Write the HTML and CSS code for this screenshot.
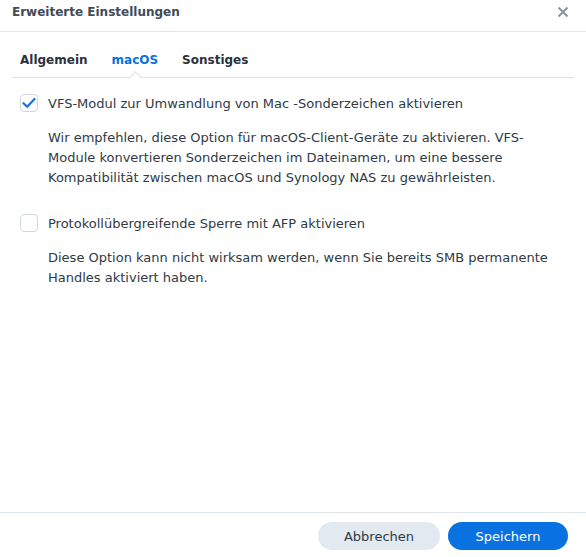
FILE: index.html
```html
<!DOCTYPE html>
<html lang="de">
<head>
<meta charset="utf-8">
<link rel="stylesheet" href="styles.css">
</head>
<body>
<div class="dialog">
  <header class="head">
    <span class="title">Erweiterte Einstellungen</span>
    <span class="close" aria-label="Schließen">
      <svg width="12" height="12" viewBox="0 0 12 12"><path d="M1.5 1.5 L10.5 10.5 M10.5 1.5 L1.5 10.5" stroke="#8a949e" stroke-width="1.9" fill="none"/></svg>
    </span>
  </header>
  <nav class="tabs">
    <span class="tab">Allgemein</span>
    <span class="tab active">macOS</span>
    <span class="tab">Sonstiges</span>
  </nav>
  <main class="content">
    <div class="option">
      <label class="row">
        <span class="box checked">
          <svg width="14" height="12" viewBox="0 0 14 12"><path d="M1.5 6.2 L5.2 9.8 L12.5 2" stroke="#1572e0" stroke-width="2.2" fill="none" stroke-linecap="round" stroke-linejoin="round"/></svg>
        </span>
        <span class="label">VFS-Modul zur Umwandlung von Mac -Sonderzeichen aktivieren</span>
      </label>
      <p class="desc">Wir empfehlen, diese Option für macOS-Client-Geräte zu aktivieren. VFS-Module konvertieren Sonderzeichen im Dateinamen, um eine bessere Kompatibilität zwischen macOS und Synology NAS zu gewährleisten.</p>
    </div>
    <div class="option">
      <label class="row">
        <span class="box"></span>
        <span class="label">Protokollübergreifende Sperre mit AFP aktivieren</span>
      </label>
      <p class="desc">Diese Option kann nicht wirksam werden, wenn Sie bereits SMB permanente Handles aktiviert haben.</p>
    </div>
  </main>
  <footer class="foot">
    <button class="btn secondary">Abbrechen</button>
    <button class="btn primary">Speichern</button>
  </footer>
</div>
</body>
</html>
```
FILE: styles.css
```css
* { box-sizing: border-box; }
html, body { margin: 0; padding: 0; background: #fff; }
body {
  font-family: "DejaVu Sans", Verdana, sans-serif;
  font-size: 13px;
  color: #2f3a45;
}
.dialog {
  width: 586px;
  height: 557px;
  display: flex;
  flex-direction: column;
}
.head {
  height: 32px;
  border-bottom: 1px solid #dde4ec;
  display: flex;
  align-items: center;
  justify-content: space-between;
  padding: 0 17px 7px 12px;
}
.title {
  font-weight: bold;
  font-size: 12px;
  color: #414b55;
}
.close { display: flex; }
.tabs {
  margin: 0 12px;
  height: 46px;
  border-bottom: 1px solid #d6dfe8;
  display: flex;
  align-items: flex-end;
  gap: 24px;
  padding: 0 0 10px 8px;
  position: relative;
}
.tab {
  font-weight: bold;
  font-size: 12px;
  color: #2a323b;
  position: relative;
}
.tab.active { color: #0a72e0; }
.tab.active::after {
  content: "";
  position: absolute;
  left: 50%;
  bottom: -15px;
  width: 8px;
  height: 8px;
  margin-left: -4px;
  background: #fff;
  border-left: 1px solid #d6dfe8;
  border-top: 1px solid #d6dfe8;
  transform: rotate(45deg);
}
.content {
  flex: 1;
  padding: 15px 20px 0 20px;
}
.option { margin-bottom: 25px; }
.row {
  display: flex;
  align-items: center;
  gap: 10px;
  height: 20px;
}
.box {
  width: 18px;
  height: 18px;
  border: 1px solid #cdd8e3;
  border-radius: 4px;
  display: flex;
  align-items: center;
  justify-content: center;
  background: #fff;
}
.label { color: #2f3a45; }
.desc {
  margin: 15px 0 0 28px;
  line-height: 20px;
  color: #2f3a45;
}
.foot {
  height: 45px;
  border-top: 1px solid #dde4ec;
  display: flex;
  justify-content: flex-end;
  align-items: flex-start;
  gap: 8px;
  padding: 9px 18px 0 0;
}
.btn {
  font-family: "DejaVu Sans", Verdana, sans-serif;
  font-size: 13px;
  height: 28px;
  width: 122px;
  border: none;
  border-radius: 14px;
}
.secondary { background: #e3e9f0; color: #2f3a45; }
.primary { background: #0a72e0; color: #fff; width: 120px; }
```
